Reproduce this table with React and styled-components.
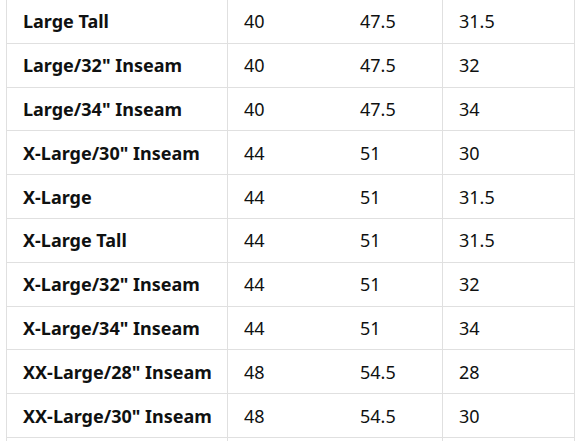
import React from "react";
import styled, { createGlobalStyle } from "styled-components";

const GlobalStyle = createGlobalStyle`
    html, body {
        margin: 0;
        padding: 0;
        background: #ffffff;
        overflow: hidden;
    }
`;

const rows = [
    ["Large Tall", "40", "47.5", "31.5"],
    ["Large/32\" Inseam", "40", "47.5", "32"],
    ["Large/34\" Inseam", "40", "47.5", "34"],
    ["X-Large/30\" Inseam", "44", "51", "30"],
    ["X-Large", "44", "51", "31.5"],
    ["X-Large Tall", "44", "51", "31.5"],
    ["X-Large/32\" Inseam", "44", "51", "32"],
    ["X-Large/34\" Inseam", "44", "51", "34"],
    ["XX-Large/28\" Inseam", "48", "54.5", "28"],
    ["XX-Large/30\" Inseam", "48", "54.5", "30"],
    ["", "", "", ""], // next row, cut off by the bottom edge
];

const SizeChart = () => {
    return (
        <Wrapper>
            <Table>
                {rows.map((row, i) => (
                    <Row key={i}>
                        <Cell $bold $divider>{row[0]}</Cell>
                        <Cell>{row[1]}</Cell>
                        <Cell $divider>{row[2]}</Cell>
                        <Cell>{row[3]}</Cell>
                    </Row>
                ))}
            </Table>
        </Wrapper>
    );
};

const Wrapper = styled.div`
    width: 588px;
    height: 441px;
    overflow: hidden;
    padding-left: 6px;
    box-sizing: border-box;
`;

const Table = styled.div`
    width: 567px;
    margin-top: -1px;
    border-left: 1px solid #e0e0e0;
    border-right: 1px solid #e0e0e0;
    font-family: "Noto Sans", "Open Sans", sans-serif;
    color: #0f1111;
`;

const Row = styled.div`
    display: grid;
    grid-template-columns: 221px 116px 99px 1fr;
    height: 43.8px;
    border-top: 1px solid #e0e0e0;
    box-sizing: border-box;
`;

const Cell = styled.div`
    display: flex;
    align-items: center;
    padding-left: 16px;
    font-size: 18px;
    font-weight: ${(p) => (p.$bold ? 700 : 400)};
    white-space: nowrap;
    border-right: ${(p) => (p.$divider ? "1px solid #e0e0e0" : "none")};
`;

export default function App() {
    return (
        <>
            <GlobalStyle />
            <SizeChart />
        </>
    );
}
